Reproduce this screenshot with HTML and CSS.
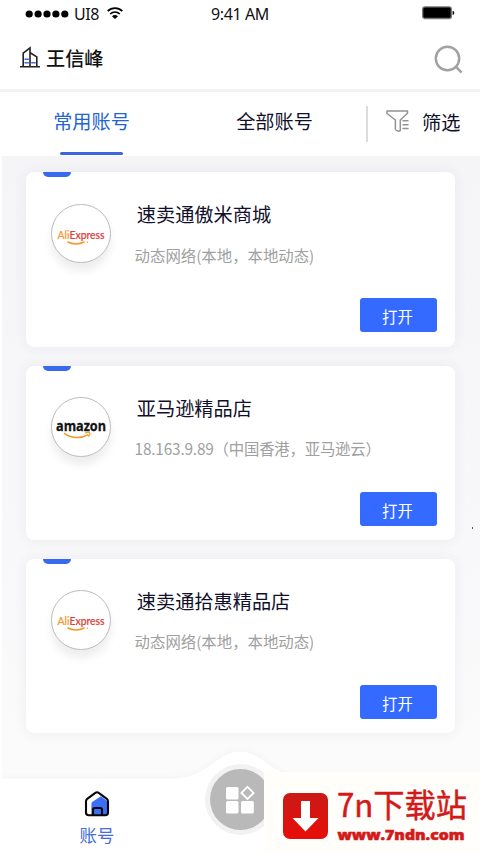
FILE: index.html
```html
<!DOCTYPE html>
<html lang="zh-CN">
<head>
<meta charset="utf-8">
<meta name="viewport" content="width=device-width, initial-scale=1">
<title>账号</title>
<link rel="stylesheet" href="styles.css">
</head>
<body>
<div class="app">
  <div class="status">
    <div class="carrier">
      <svg width="44" height="10" viewBox="0 0 44 10"><circle cx="4.2" cy="5" r="3.6"/><circle cx="13.1" cy="5" r="3.6"/><circle cx="22" cy="5" r="3.6"/><circle cx="30.9" cy="5" r="3.6"/><circle cx="39.8" cy="5" r="3.6"/></svg>
      <span class="carrier-name">UI8</span>
      <svg class="wifi" width="16" height="12" viewBox="0 0 16 12"><path d="M.7 4.1C4.8.1 11.2.1 15.3 4.1M3.2 7c2.8-2.6 6.8-2.6 9.6 0" fill="none" stroke="#000" stroke-width="1.7"/><path d="M5 9.2c1.8-1.5 4.2-1.5 6 0L8 11.9z"/></svg>
    </div>
    <span class="clock">9:41 AM</span>
    <svg class="battery" width="33" height="14" viewBox="0 0 33 14"><rect x=".7" y=".9" width="28.6" height="11.6" rx="2" stroke="#777" stroke-width="1.3"/><path d="M30.6 4.7c2.2.4 2.2 3.8 0 4.2z"/></svg>
  </div>
  <header class="header">
    <svg class="building" width="20" height="21" viewBox="0 0 20 21" fill="none" stroke="#222" stroke-width="1.6"><path d="M0 19.7h20M3.2 19.5V6.2L10 .9v18.6M10.2 5.8l6.6 4.1v9.6"/><path d="M4.5 12.3h4.3M4.5 15.7h4.3M11.2 15.7h4.6" stroke="#4669dc" stroke-width="1.6"/></svg>
    <h1 class="user">王信峰</h1>
    <svg class="search" width="29" height="29" viewBox="0 0 29 29" fill="none" stroke="#a2a2a2" stroke-width="2.5"><circle cx="13.5" cy="13.5" r="11.7"/><path d="m21.8 21.7 5.8 6"/></svg>
  </header>
  <nav class="tabs">
    <a class="tab tab-active">常用账号</a>
    <a class="tab">全部账号</a>
    <a class="filter">
      <svg width="23" height="23" viewBox="0 0 23 23" fill="none" stroke="#939393" stroke-width="1.5" stroke-linejoin="round" stroke-linecap="round"><path d="M1 1h20.5v2.3L14.3 10v10.2c0 2-4.9.5-4.9-1.2V10L1 3.5z"/><path d="M17 10.8h5M17 14.7h5M17 18.4h5"/></svg>
      <span>筛选</span>
    </a>
  </nav>
  <main class="list">
    <article class="card">
      <div class="logo">
        <svg width="56" height="56" viewBox="0 0 56 56"><text class="ali" x="4.6" y="32.6" textLength="47" lengthAdjust="spacingAndGlyphs"><tspan fill="#f29a35">Ali</tspan><tspan fill="#da433b">Express</tspan></text><path d="M15 36c4 2.6 12 2.6 16 0" fill="none" stroke="#f39a24" stroke-width="1.5" stroke-linecap="round"/><circle cx="34.5" cy="36.3" r=".7" fill="#f39a24"/></svg>
      </div>
      <div class="info"><h2>速卖通傲米商城</h2><p>动态网络(本地，本地动态)</p></div>
      <button class="open">打开</button>
    </article>
    <article class="card">
      <div class="logo">
        <svg width="56" height="56" viewBox="0 0 56 56"><text class="amz" x="3" y="32" textLength="50" lengthAdjust="spacingAndGlyphs">amazon</text><path d="M11 34.2c7 5.4 17 5.6 24.3 1.4" fill="none" stroke="#f39a24" stroke-width="1.6"/><path d="M32 34.2c2-1 4.2-1 4.7-.4s-.2 2.3-1.4 3.8" fill="none" stroke="#f39a24" stroke-width="1.2"/></svg>
      </div>
      <div class="info"><h2>亚马逊精品店</h2><p class="address">18.163.9.89（中国香港，亚马逊云）</p></div>
      <button class="open">打开</button>
    </article>
    <article class="card">
      <div class="logo">
        <svg width="56" height="56" viewBox="0 0 56 56"><text class="ali" x="4.6" y="32.6" textLength="47" lengthAdjust="spacingAndGlyphs"><tspan fill="#f29a35">Ali</tspan><tspan fill="#da433b">Express</tspan></text><path d="M15 36c4 2.6 12 2.6 16 0" fill="none" stroke="#f39a24" stroke-width="1.5" stroke-linecap="round"/><circle cx="34.5" cy="36.3" r=".7" fill="#f39a24"/></svg>
      </div>
      <div class="info"><h2>速卖通拾惠精品店</h2><p>动态网络(本地，本地动态)</p></div>
      <button class="open">打开</button>
    </article>
  </main>
  <i class="speck"></i>
  <footer class="bottom">
    <svg class="bottom-shape" width="480" height="103" viewBox="0 0 480 103"><path d="M0 28.5h170c24 0 32-8 46-17 16-13 32-13 48 0 14 9 22 17 46 17h170V103H0z" fill="#fff"/></svg>
    <a class="home">
      <svg width="26" height="26" viewBox="0 0 26 26"><path d="M7.4 24V13.2c0-1.2.5-2 1.5-2.7l8-5.2 6.6 5.2V24z" fill="#3c6ef7"/><path d="M2 10.3c0-1 .4-1.8 1.2-2.4l8.1-6c1-.8 2.4-.8 3.4 0l8.1 6c.8.6 1.2 1.4 1.2 2.4v11.2c0 1.7-1 2.7-2.7 2.7H4.7C3 24.2 2 23.2 2 21.5zM9 24v-5.3c0-1.1.7-1.7 1.7-1.7h5.6c1 0 1.7.6 1.7 1.7V24" fill="none" stroke="#080808" stroke-width="2.1"/></svg>
      <span>账号</span>
    </a>
    <a class="apps">
      <svg width="30" height="29" viewBox="0 0 30 29" fill="#fff"><rect x="1" y="2" width="12.5" height="12.5" rx="1.5"/><rect x="1" y="16" width="12.5" height="12.5" rx="1.5"/><rect x="16" y="16" width="12.8" height="12.5" rx="1.5"/><path d="m22.5 1.8 6.1 6.1-6.1 6.1-6.1-6.1z" fill="none" stroke="#fff" stroke-width="1.9"/></svg>
    </a>
    <div class="promo">
      <svg class="download" width="45" height="46" viewBox="0 0 45 46"><defs><linearGradient id="red" x2="0" y2="1"><stop stop-color="#c91a17"/><stop offset="1" stop-color="#e80d08"/></linearGradient></defs><rect width="45" height="46" rx="7" fill="url(#red)"/><path d="M18 8h9v17h8.5L22.5 38.5 9.5 25H18z" fill="#fff"/></svg>
      <svg class="promo-text" width="134" height="60" viewBox="0 0 134 60"><text class="promo-name" x="1" y="33.5" textLength="130" lengthAdjust="spacingAndGlyphs">7n下载站</text><text class="promo-url" x="1.5" y="56.5" textLength="127" lengthAdjust="spacingAndGlyphs">www.7ndn.com</text></svg>
    </div>
  </footer>
</div>
</body>
</html>
```
FILE: styles.css
```css
* { box-sizing: border-box; }
body {
  margin: 0;
  background: #fff;
  font-family: "Noto Sans CJK SC", "Noto Sans", sans-serif;
  color: #10102a;
}
h1, h2, p { margin: 0; font-weight: 400; }
svg { display: block; flex: none; overflow: visible; }
.app {
  position: relative;
  width: 480px;
  height: 853px;
  overflow: hidden;
  display: flex;
  flex-direction: column;
}
.status {
  height: 28px;
  flex: none;
  display: grid;
  grid-template-columns: 1fr auto 1fr;
  align-items: center;
  padding: 0 25px;
  color: #111;
  font: 16px/28px "Noto Sans", sans-serif;
  letter-spacing: -.4px;
}
.carrier { display: flex; align-items: center; }
.carrier-name { margin-left: 5px; }
.wifi { margin: -2px 0 0 8px; }
.battery { justify-self: end; margin-top: -2px; }
.header {
  height: 64px;
  flex: none;
  display: flex;
  align-items: center;
  padding: 0 17px 4px 20px;
  border-bottom: 3px solid #f2f2f2;
}
.building { margin-top: 2px; }
.user { margin: 2px auto 0 6px; font-size: 19.2px; line-height: 28px; font-weight: 500; color: #111; }
.search { margin-top: 6px; }
.tabs {
  height: 64px;
  flex: none;
  display: grid;
  grid-template-columns: 183px 183px 114px;
  font-size: 19.2px;
  line-height: 28px;
}
.tab { display: flex; flex-direction: column; align-items: center; padding-top: 15px; }
.tab-active { color: #2465ce; }
.tab-active::after {
  content: "";
  width: 63px;
  height: 3px;
  margin-top: 17px;
  border-radius: 2px;
  background: #3d66dc;
}
.filter {
  display: flex;
  align-items: center;
  gap: 13px;
  height: 36px;
  margin-top: 14px;
  padding-left: 18px;
  border-left: 2px solid #dcdcde;
}
.filter svg { margin-top: -5px; }
.filter span { margin-top: -4px; }
.list {
  flex: 1;
  margin-left: 2px;
  padding: 16.4px 25px 0 23.6px;
  display: flex;
  flex-direction: column;
  gap: 18.9px;
  background: linear-gradient(#f5f5f8, #f8f8fa 55%, #fcfcfc);
}
.card {
  position: relative;
  height: 174.3px;
  flex: none;
  display: grid;
  grid-template-columns: 84px 1fr;
  grid-template-rows: 126px 34px;
  padding-left: 25.7px;
  border-radius: 8px;
  background: #fff;
  box-shadow: 0 0 13px rgba(70, 70, 95, .07);
}
.card::before {
  content: "";
  position: absolute;
  left: 17px;
  top: 0;
  width: 28px;
  height: 5px;
  border-radius: 0 0 5px 5px;
  background: #3869ee;
}
.logo {
  width: 59.5px;
  height: 59.5px;
  margin-top: 31.5px;
  border: 1.5px solid #bcbcbf;
  border-radius: 50%;
  background: #fff;
  box-shadow: 0 8px 9px rgba(0, 0, 0, .07);
  display: flex;
  align-items: center;
  justify-content: center;
}
.ali { font: 500 11.5px Lato, sans-serif; stroke-width: .2px; }
.ali tspan:last-child { stroke: #da433b; }
.ali tspan:first-child { stroke: #f29a35; }
.amz { font: 700 14.5px "Open Sans", sans-serif; fill: #111; stroke: #111; stroke-width: .3px; }
.info h2 { margin: 28px 0 0 1.5px; font-size: 19.2px; line-height: 28px; }
.info p { margin: 15.5px 0 0 -.7px; font-size: 15.4px; line-height: 23px; color: #a0a0a0; white-space: nowrap; }
.info .address { letter-spacing: -.2px; }
.open {
  grid-column: 2;
  justify-self: end;
  width: 77px;
  height: 34px;
  margin-right: 18px;
  padding: 2px 2px 0 0;
  border: 0;
  border-radius: 3px;
  background: #346aff;
  color: #fff;
  font: 15.4px/30px "Noto Sans CJK SC", sans-serif;
}
.speck { position: absolute; left: 472px; top: 527px; width: 1px; height: 2px; background: #555; }
.bottom {
  position: absolute;
  left: 0;
  bottom: 0;
  width: 480px;
  height: 103px;
  display: grid;
  grid-template-columns: 194px 92px 194px;
}
.bottom-shape { position: absolute; inset: 0; filter: drop-shadow(0 -1px 3px rgba(0, 0, 0, .03)); }
.home {
  position: relative;
  display: flex;
  flex-direction: column;
  align-items: center;
  padding-top: 41px;
  color: #466ed5;
  font-size: 17.4px;
  line-height: 26px;
}
.home span { margin-top: 5px; }
.apps {
  position: relative;
  justify-self: center;
  width: 61px;
  height: 61px;
  margin-top: 19px;
  border-radius: 50%;
  background: #b9b9b9;
  box-shadow: 0 0 0 5px #f2f2f2;
  display: flex;
  align-items: center;
  justify-content: center;
}
.promo {
  position: absolute;
  right: 0;
  bottom: 0;
  width: 216px;
  height: 81px;
  display: flex;
  align-items: flex-start;
  gap: 8px;
  padding: 11px 0 0 19px;
  background: #fffefa;
}
.download { margin-top: 10px; }
.promo-name { font: 400 32px "Noto Sans CJK SC", sans-serif; fill: #d31a1a; stroke: #d31a1a; stroke-width: .5px; }
.promo-url { font: 900 14px "Open Sans", sans-serif; fill: #d31a1a; stroke: #d31a1a; stroke-width: .6px; }
```
